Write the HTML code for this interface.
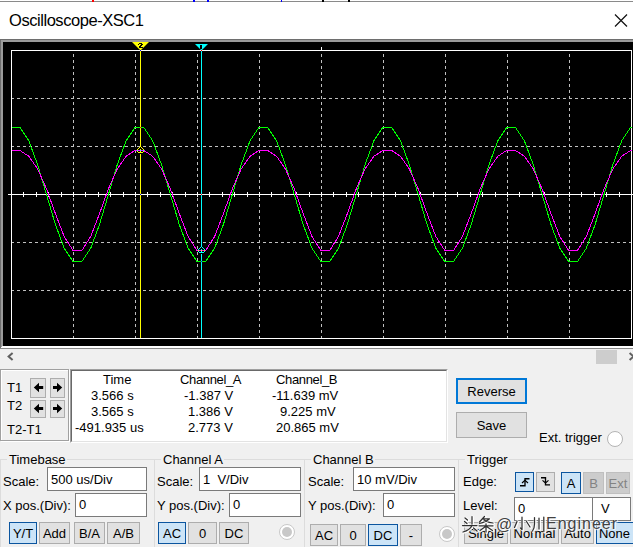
<!DOCTYPE html>
<html><head><meta charset="utf-8">
<style>
html,body{margin:0;padding:0;}
body{width:633px;height:547px;overflow:hidden;position:relative;background:#f0f0f0;font-family:"Liberation Sans",sans-serif;}
.a{position:absolute;}
.t{position:absolute;font-size:13px;line-height:15px;white-space:nowrap;color:#000;}
.btn{position:absolute;box-sizing:border-box;background:#e1e1e1;border:1px solid #adadad;font-size:13px;line-height:15px;text-align:center;white-space:nowrap;color:#000;}
.sel{background:#cce4f7;border:1px solid #0b559f;}
.dis{background:#cccccc;border:1px solid #bfbfbf;}
.inp{position:absolute;box-sizing:border-box;background:#fff;border:1px solid #7a7a7a;}
svg{position:absolute;left:0;top:0;}
</style></head><body>
<!-- title bar -->
<div class="a" style="left:0;top:0;width:633px;height:39px;background:#fff;"></div>
<div class="a" style="left:0;top:1px;width:633px;height:1px;background:#8a8a8a;"></div>
<div class="a" style="left:92px;top:0;width:2px;height:2px;background:#f00;"></div>
<div class="a" style="left:193px;top:0;width:2px;height:2px;background:#00f;"></div>
<div class="a" style="left:207px;top:0;width:2px;height:2px;background:#00f;"></div>
<div class="a" style="left:281px;top:0;width:1px;height:2px;background:#00f;"></div>
<div class="a" style="left:322px;top:0;width:2px;height:2px;background:#000;"></div>
<div class="a" style="left:348px;top:0;width:2px;height:2px;background:#000;"></div>
<div class="t" style="left:9px;top:11px;font-size:16.5px;line-height:19px;letter-spacing:-0.45px;color:#000;">Oscilloscope-XSC1</div>

<svg width="633" height="547" viewBox="0 0 633 547">
 <!-- close X -->
 <path d="M615 14.5 L627 26.5 M627 14.5 L615 26.5" stroke="#111" stroke-width="1.2" fill="none"/>
 <!-- screen frame -->
 <rect x="0" y="39" width="633" height="310" fill="#000"/>
 <rect x="0" y="39" width="633" height="1" fill="#6e6e6e"/>
 <rect x="0" y="40" width="633" height="2" fill="#9a9a9a"/>
 <rect x="0" y="39" width="1" height="310" fill="#6e6e6e"/>
 <rect x="1" y="40" width="2" height="308" fill="#9a9a9a"/>
 <rect x="2" y="346" width="631" height="2" fill="#fff"/>
 <rect x="1" y="347" width="1" height="1" fill="#fff"/>
 <rect x="0" y="348" width="633" height="1" fill="#8a8a8a"/>
 <!-- grid -->
 <g stroke="#c0c0c0" stroke-width="1" stroke-dasharray="3 3" shape-rendering="crispEdges">
<line x1="73.5" y1="54" x2="73.5" y2="338" />
<line x1="135.5" y1="54" x2="135.5" y2="338" />
<line x1="197.5" y1="54" x2="197.5" y2="338" />
<line x1="259.5" y1="54" x2="259.5" y2="338" />
<line x1="321.5" y1="54" x2="321.5" y2="338" />
<line x1="383.5" y1="54" x2="383.5" y2="338" />
<line x1="445.5" y1="54" x2="445.5" y2="338" />
<line x1="507.5" y1="54" x2="507.5" y2="338" />
<line x1="569.5" y1="54" x2="569.5" y2="338" />
<line x1="11" y1="98.5" x2="631" y2="98.5" />
<line x1="11" y1="146.5" x2="631" y2="146.5" />
<line x1="11" y1="242.5" x2="631" y2="242.5" />
<line x1="11" y1="290.5" x2="631" y2="290.5" />
 </g>
 <rect x="11.5" y="50.5" width="620" height="288" fill="none" stroke="#fff" stroke-width="1" shape-rendering="crispEdges"/>
 <rect x="8" y="194" width="626" height="1" fill="#fff"/>
 <g fill="#fff">
<rect x="11" y="192" width="1" height="5"/>
<rect x="23" y="192" width="1" height="5"/>
<rect x="36" y="192" width="1" height="5"/>
<rect x="48" y="192" width="1" height="5"/>
<rect x="61" y="192" width="1" height="5"/>
<rect x="73" y="192" width="1" height="5"/>
<rect x="85" y="192" width="1" height="5"/>
<rect x="98" y="192" width="1" height="5"/>
<rect x="110" y="192" width="1" height="5"/>
<rect x="123" y="192" width="1" height="5"/>
<rect x="135" y="192" width="1" height="5"/>
<rect x="147" y="192" width="1" height="5"/>
<rect x="160" y="192" width="1" height="5"/>
<rect x="172" y="192" width="1" height="5"/>
<rect x="185" y="192" width="1" height="5"/>
<rect x="197" y="192" width="1" height="5"/>
<rect x="209" y="192" width="1" height="5"/>
<rect x="222" y="192" width="1" height="5"/>
<rect x="234" y="192" width="1" height="5"/>
<rect x="247" y="192" width="1" height="5"/>
<rect x="259" y="192" width="1" height="5"/>
<rect x="271" y="192" width="1" height="5"/>
<rect x="284" y="192" width="1" height="5"/>
<rect x="296" y="192" width="1" height="5"/>
<rect x="309" y="192" width="1" height="5"/>
<rect x="321" y="192" width="1" height="5"/>
<rect x="333" y="192" width="1" height="5"/>
<rect x="346" y="192" width="1" height="5"/>
<rect x="358" y="192" width="1" height="5"/>
<rect x="371" y="192" width="1" height="5"/>
<rect x="383" y="192" width="1" height="5"/>
<rect x="395" y="192" width="1" height="5"/>
<rect x="408" y="192" width="1" height="5"/>
<rect x="420" y="192" width="1" height="5"/>
<rect x="433" y="192" width="1" height="5"/>
<rect x="445" y="192" width="1" height="5"/>
<rect x="457" y="192" width="1" height="5"/>
<rect x="470" y="192" width="1" height="5"/>
<rect x="482" y="192" width="1" height="5"/>
<rect x="495" y="192" width="1" height="5"/>
<rect x="507" y="192" width="1" height="5"/>
<rect x="519" y="192" width="1" height="5"/>
<rect x="532" y="192" width="1" height="5"/>
<rect x="544" y="192" width="1" height="5"/>
<rect x="557" y="192" width="1" height="5"/>
<rect x="569" y="192" width="1" height="5"/>
<rect x="581" y="192" width="1" height="5"/>
<rect x="594" y="192" width="1" height="5"/>
<rect x="606" y="192" width="1" height="5"/>
<rect x="619" y="192" width="1" height="5"/>
<rect x="631" y="192" width="1" height="5"/>
 <rect x="321" y="47" width="1" height="3"/>
 </g>
 <!-- traces -->
 <polyline points="11.50,127.50 19.92,127.50 28.78,140.77 37.62,164.68 46.47,194.50 55.33,224.32 64.17,248.23 73.03,261.50 81.88,261.50 90.72,248.23 99.57,224.32 108.42,194.50 117.27,164.68 126.12,140.77 134.97,127.50 143.82,127.50 152.67,140.77 161.52,164.68 170.38,194.50 179.22,224.32 188.07,248.23 196.92,261.50 205.77,261.50 214.62,248.23 223.47,224.32 232.32,194.50 241.17,164.68 250.02,140.77 258.88,127.50 267.73,127.50 276.57,140.77 285.42,164.68 294.27,194.50 303.12,224.32 311.98,248.23 320.82,261.50 329.67,261.50 338.52,248.23 347.38,224.32 356.23,194.50 365.07,164.68 373.92,140.77 382.77,127.50 391.62,127.50 400.48,140.77 409.32,164.68 418.17,194.50 427.02,224.32 435.88,248.23 444.73,261.50 453.57,261.50 462.42,248.23 471.27,224.32 480.12,194.50 488.98,164.68 497.82,140.77 506.67,127.50 515.52,127.50 524.38,140.77 533.23,164.68 542.07,194.50 550.92,224.32 559.77,248.23 568.62,261.50 577.48,261.50 586.32,248.23 595.17,224.32 604.02,194.50 612.88,164.68 621.73,140.77 630.57,127.50 631.50,127.50" fill="none" stroke="#00ff00" stroke-width="1" shape-rendering="crispEdges"/>
 <polyline points="11.50,150.49 19.92,150.49 28.78,156.26 37.62,168.94 46.47,188.90 55.33,213.45 64.17,236.46 73.03,250.50 81.88,250.50 90.72,236.46 99.57,213.45 108.42,188.90 117.27,168.94 126.12,156.26 134.97,150.49 143.82,150.49 152.67,156.26 161.52,168.94 170.38,188.90 179.22,213.45 188.07,236.46 196.92,250.50 205.77,250.50 214.62,236.46 223.47,213.45 232.32,188.90 241.17,168.94 250.02,156.26 258.88,150.49 267.73,150.49 276.57,156.26 285.42,168.94 294.27,188.90 303.12,213.45 311.98,236.46 320.82,250.50 329.67,250.50 338.52,236.46 347.38,213.45 356.23,188.90 365.07,168.94 373.92,156.26 382.77,150.49 391.62,150.49 400.48,156.26 409.32,168.94 418.17,188.90 427.02,213.45 435.88,236.46 444.73,250.50 453.57,250.50 462.42,236.46 471.27,213.45 480.12,188.90 488.98,168.94 497.82,156.26 506.67,150.49 515.52,150.49 524.38,156.26 533.23,168.94 542.07,188.90 550.92,213.45 559.77,236.46 568.62,250.50 577.48,250.50 586.32,236.46 595.17,213.45 604.02,188.90 612.88,168.94 621.73,156.26 630.57,150.49 631.50,150.49" fill="none" stroke="#ff00ff" stroke-width="1" shape-rendering="crispEdges"/>
 <!-- cursors -->
 <rect x="140" y="42" width="1" height="105" fill="#ffff00"/>
 <rect x="140" y="154" width="1" height="184" fill="#ffff00"/>
 <path d="M132 42 H149 L140.5 50.5 Z" fill="#ffff00"/>
 <g fill="#000"><rect x="139" y="43" width="3" height="1"/><rect x="138" y="44" width="1" height="1"/><rect x="141" y="44" width="2" height="1"/><rect x="140" y="45" width="2" height="1"/><rect x="139" y="46" width="2" height="1"/><rect x="139" y="47" width="4" height="1"/></g>
 <g fill="#ffff00"><rect x="139" y="147" width="1" height="1"/><rect x="141" y="147" width="1" height="1"/><rect x="138" y="148" width="1" height="1"/><rect x="142" y="148" width="1" height="1"/><rect x="137" y="149" width="1" height="1"/><rect x="143" y="149" width="1" height="1"/><rect x="140" y="149" width="1" height="1"/><rect x="137" y="150" width="1" height="1"/><rect x="143" y="150" width="1" height="1"/><rect x="140" y="150" width="1" height="1"/><rect x="137" y="151" width="1" height="1"/><rect x="143" y="151" width="1" height="1"/><rect x="140" y="151" width="1" height="1"/><rect x="138" y="152" width="1" height="1"/><rect x="139" y="152" width="1" height="1"/><rect x="140" y="152" width="1" height="1"/><rect x="141" y="152" width="1" height="1"/><rect x="142" y="152" width="1" height="1"/></g>
 <g fill="#00ffff"><rect x="137" y="150" width="1" height="1"/><rect x="140" y="150" width="1" height="1"/><rect x="143" y="150" width="1" height="1"/></g>
 <rect x="201" y="44" width="1" height="203" fill="#00ffff"/>
 <rect x="201" y="254" width="1" height="84" fill="#00ffff"/>
 <path d="M195 44 H208 L201.5 50.5 Z" fill="#00ffff"/>
 <rect x="200" y="45" width="2" height="4" fill="#000"/>
 <g fill="#00ffff"><rect x="200" y="247" width="1" height="1"/><rect x="202" y="247" width="1" height="1"/><rect x="199" y="248" width="1" height="1"/><rect x="203" y="248" width="1" height="1"/><rect x="198" y="249" width="1" height="1"/><rect x="204" y="249" width="1" height="1"/><rect x="201" y="249" width="1" height="1"/><rect x="198" y="250" width="1" height="1"/><rect x="204" y="250" width="1" height="1"/><rect x="201" y="250" width="1" height="1"/><rect x="198" y="251" width="1" height="1"/><rect x="204" y="251" width="1" height="1"/><rect x="201" y="251" width="1" height="1"/><rect x="199" y="252" width="1" height="1"/><rect x="200" y="252" width="1" height="1"/><rect x="201" y="252" width="1" height="1"/><rect x="202" y="252" width="1" height="1"/><rect x="203" y="252" width="1" height="1"/></g>
 <g fill="#ffff00"><rect x="198" y="250" width="1" height="1"/><rect x="201" y="250" width="1" height="1"/><rect x="204" y="250" width="1" height="1"/></g>
 <rect x="140" y="50" width="1" height="1" fill="#0000ff"/>
 <rect x="201" y="50" width="1" height="1" fill="#ff0000"/>
 <rect x="140" y="194" width="1" height="1" fill="#0000ff"/>
 <rect x="201" y="194" width="1" height="1" fill="#ff0000"/>
 <rect x="140" y="127" width="1" height="1" fill="#ff0000"/>
 <rect x="201" y="261" width="1" height="1" fill="#0000ff"/>
 <!-- scrollbar -->
 <path d="M12.6 353 L8.6 356.5 L12.6 360" stroke="#606060" stroke-width="2" fill="none"/>
 <rect x="596" y="350" width="21" height="14" fill="#cdcdcd"/>
 <path d="M629.6 353 L633.6 356.5 L629.6 360" stroke="#606060" stroke-width="2" fill="none"/>
</svg>

<!-- T box -->
<div class="a" style="left:1px;top:370px;width:69px;height:72px;box-sizing:border-box;border:1px solid #fff;"></div>
<div class="a" style="left:0;top:369px;width:69px;height:72px;box-sizing:border-box;border:1px solid #a0a0a0;"></div>
<div class="t" style="left:7px;top:380px;">T1</div>
<div class="t" style="left:7px;top:398px;">T2</div>
<div class="t" style="left:7px;top:422px;">T2-T1</div>
<div class="btn" style="left:30px;top:378px;width:16px;height:20px;"></div>
<div class="btn" style="left:50px;top:378px;width:15px;height:20px;"></div>
<div class="btn" style="left:30px;top:400px;width:16px;height:18px;"></div>
<div class="btn" style="left:50px;top:400px;width:15px;height:18px;"></div>
<svg width="633" height="547" viewBox="0 0 633 547" style="pointer-events:none">
 <path d="M33.8 387.5 L39 382.8 V385.9 H43.2 V389.1 H39 V392.2 Z" fill="#000"/>
 <path d="M62.2 387.5 L57 382.8 V385.9 H53 V389.1 H57 V392.2 Z" fill="#000"/>
 <path d="M33.8 408.5 L39 403.8 V406.9 H43.2 V410.1 H39 V413.2 Z" fill="#000"/>
 <path d="M62.2 408.5 L57 403.8 V406.9 H53 V410.1 H57 V413.2 Z" fill="#000"/>
</svg>

<!-- table -->
<div class="a" style="left:70px;top:369px;width:378px;height:74px;box-sizing:border-box;background:#fff;border-top:1px solid #a0a0a0;border-left:1px solid #a0a0a0;border-right:1px solid #fff;border-bottom:1px solid #fff;"></div>
<div class="a" style="left:71px;top:370px;width:376px;height:72px;box-sizing:border-box;border-top:1px solid #696969;border-left:1px solid #696969;border-right:1px solid #e3e3e3;border-bottom:1px solid #e3e3e3;"></div>
<div class="t" style="left:103px;top:372px;">Time</div>
<div class="t" style="left:91px;top:388px;">3.566 s</div>
<div class="t" style="left:91px;top:404px;">3.565 s</div>
<div class="t" style="left:75px;top:420px;">-491.935 us</div>
<div class="t" style="left:180px;top:372px;letter-spacing:-0.35px;">Channel_A</div>
<div class="t" style="left:184px;top:388px;">-1.387 V</div>
<div class="t" style="left:188px;top:404px;">1.386 V</div>
<div class="t" style="left:188px;top:420px;">2.773 V</div>
<div class="t" style="left:276px;top:372px;letter-spacing:-0.35px;">Channel_B</div>
<div class="t" style="left:272px;top:388px;">-11.639 mV</div>
<div class="t" style="left:280px;top:404px;">9.225 mV</div>
<div class="t" style="left:276px;top:420px;">20.865 mV</div>

<!-- reverse/save -->
<div class="btn" style="left:456px;top:378px;width:71px;height:26px;border:2px solid #0078d7;padding-top:4px;">Reverse</div>
<div class="btn" style="left:456px;top:412px;width:71px;height:26px;padding-top:5px;">Save</div>
<div class="t" style="left:539px;top:430px;">Ext. trigger</div>
<div class="a" style="left:607px;top:431px;width:16px;height:16px;box-sizing:border-box;border-radius:50%;border:1px solid #b4b4b4;background:#fff;"></div>

<!-- group boxes -->
<div class="a" style="left:0;top:459px;width:633px;height:1px;background:#dcdcdc;"></div>
<div class="a" style="left:0;top:459px;width:1px;height:88px;background:#dcdcdc;"></div>
<div class="a" style="left:154px;top:459px;width:1px;height:88px;background:#dcdcdc;"></div>
<div class="a" style="left:304px;top:459px;width:1px;height:88px;background:#dcdcdc;"></div>
<div class="a" style="left:458px;top:459px;width:1px;height:88px;background:#dcdcdc;"></div>
<div class="t" style="left:7px;top:452px;background:#f0f0f0;padding:0 1px 0 2px;">Timebase</div>
<div class="t" style="left:161px;top:452px;background:#f0f0f0;padding:0 1px 0 2px;">Channel A</div>
<div class="t" style="left:311px;top:452px;background:#f0f0f0;padding:0 1px 0 2px;">Channel B</div>
<div class="t" style="left:465px;top:452px;background:#f0f0f0;padding:0 1px 0 2px;">Trigger</div>

<!-- timebase -->
<div class="t" style="left:3px;top:474px;">Scale:</div>
<div class="inp" style="left:47px;top:467px;width:100px;height:24px;"></div>
<div class="t" style="left:51px;top:472px;">500 us/Div</div>
<div class="t" style="left:3px;top:498px;">X pos.(Div):</div>
<div class="inp" style="left:75px;top:493px;width:72px;height:24px;"></div>
<div class="t" style="left:79px;top:497px;">0</div>
<div class="btn sel" style="left:9px;top:522px;width:28px;height:22px;padding-top:3px;">Y/T</div>
<div class="btn" style="left:39px;top:522px;width:31px;height:22px;padding-top:3px;">Add</div>
<div class="btn" style="left:74px;top:522px;width:31px;height:22px;padding-top:3px;">B/A</div>
<div class="btn" style="left:107px;top:522px;width:33px;height:22px;padding-top:3px;">A/B</div>

<!-- channel A -->
<div class="t" style="left:157px;top:474px;">Scale:</div>
<div class="inp" style="left:199px;top:467px;width:102px;height:24px;"></div>
<div class="t" style="left:203px;top:472px;">1&nbsp; V/Div</div>
<div class="t" style="left:157px;top:498px;">Y pos.(Div):</div>
<div class="inp" style="left:229px;top:493px;width:72px;height:24px;"></div>
<div class="t" style="left:233px;top:497px;">0</div>
<div class="btn sel" style="left:158px;top:522px;width:28px;height:22px;padding-top:3px;">AC</div>
<div class="btn" style="left:188px;top:522px;width:29px;height:22px;padding-top:3px;">0</div>
<div class="btn" style="left:219px;top:522px;width:30px;height:22px;padding-top:3px;">DC</div>
<div class="a" style="left:279px;top:524px;width:16px;height:16px;box-sizing:border-box;border-radius:50%;border:1px solid #c8c8c8;background:#fff;"></div>
<div class="a" style="left:282px;top:527px;width:10px;height:10px;border-radius:50%;background:#c8c8c8;"></div>

<!-- channel B -->
<div class="t" style="left:308px;top:474px;">Scale:</div>
<div class="inp" style="left:353px;top:467px;width:102px;height:24px;"></div>
<div class="t" style="left:357px;top:472px;">10 mV/Div</div>
<div class="t" style="left:308px;top:498px;">Y pos.(Div):</div>
<div class="inp" style="left:383px;top:493px;width:72px;height:24px;"></div>
<div class="t" style="left:387px;top:497px;">0</div>
<div class="btn" style="left:310px;top:524px;width:28px;height:22px;padding-top:3px;">AC</div>
<div class="btn" style="left:340px;top:524px;width:26px;height:22px;padding-top:3px;">0</div>
<div class="btn sel" style="left:368px;top:524px;width:30px;height:22px;padding-top:3px;">DC</div>
<div class="btn" style="left:400px;top:524px;width:22px;height:22px;padding-top:3px;">-</div>
<div class="a" style="left:439px;top:526px;width:16px;height:16px;box-sizing:border-box;border-radius:50%;border:1px solid #c8c8c8;background:#fff;"></div>
<div class="a" style="left:442px;top:529px;width:10px;height:10px;border-radius:50%;background:#c8c8c8;"></div>

<!-- trigger -->
<div class="t" style="left:463px;top:474px;">Edge:</div>
<div class="btn sel" style="left:515px;top:472px;width:19px;height:20px;"></div>
<div class="btn" style="left:536px;top:472px;width:19px;height:20px;"></div>
<div class="btn sel" style="left:561px;top:472px;width:20px;height:22px;padding-top:3px;">A</div>
<div class="btn dis" style="left:583px;top:472px;width:21px;height:22px;padding-top:3px;color:#838383;">B</div>
<div class="btn dis" style="left:606px;top:472px;width:24px;height:22px;padding-top:3px;color:#838383;">Ext</div>
<div class="t" style="left:463px;top:498px;">Level:</div>
<div class="inp" style="left:514px;top:497px;width:79px;height:24px;"></div>
<div class="t" style="left:518px;top:501px;">0</div>
<div class="inp" style="left:592px;top:497px;width:39px;height:24px;"></div>
<div class="t" style="left:601px;top:501px;">V</div>
<div class="btn" style="left:464px;top:522px;width:44px;height:22px;padding-top:3px;">Single</div>
<div class="btn" style="left:510px;top:522px;width:49px;height:22px;padding-top:3px;">Normal</div>
<div class="btn" style="left:561px;top:522px;width:33px;height:22px;padding-top:3px;">Auto</div>
<div class="btn sel" style="left:596px;top:522px;width:40px;height:22px;padding-top:3px;padding-right:3px;">None</div>
<svg width="633" height="547" viewBox="0 0 633 547" style="pointer-events:none">
 <path d="M520 485.7 H525 V478.7 H529.5" stroke="#000" stroke-width="1.35" fill="none"/>
 <path d="M522 483 L525 480.3 L528 483" stroke="#000" stroke-width="1.1" fill="none"/>
 <path d="M541 477.7 H545.5 V484.9 H550" stroke="#000" stroke-width="1.35" fill="none"/>
 <path d="M542.5 480.3 L545.5 483 L548.5 480.3" stroke="#000" stroke-width="1.1" fill="none"/>
</svg>

<!-- watermark -->
<svg width="633" height="547" viewBox="0 0 633 547" style="pointer-events:none">
 <defs>
  <g id="cjk" fill="none" stroke-linecap="round" stroke-linejoin="round">
   <path d="M465 518 L467.5 520 M464.5 521.5 L467 523.5 M472 516.5 V524 M462.5 525.5 H477 M472 525.5 Q470 530 463 532 M473.5 528 L477 531"/>
   <path d="M484.5 516.5 L479.5 522 M482.5 518.8 H489.5 Q486 522 479.5 523.5 M484 520 Q488 522.5 493 523 M479 525.8 H493 M486 523.8 V532 M485.5 526.5 L480 530.5 M486.5 526.5 L492.5 530.5"/>
   <path d="M522 517 V529.5 L520.5 528 M517 521.5 L514.5 527.5 M526.5 521.5 L530 527"/>
   <path d="M534.5 517.5 V524 Q534.5 528 532.5 531 M539 518 V529 M543.8 517 V531.5"/>
  </g>
 </defs>
 <use href="#cjk" x="0.6" y="0.4" stroke="#ffffff" stroke-width="3" opacity="0.9"/>
 <use href="#cjk" stroke="#303030" stroke-width="1.25"/>
</svg>
<div class="t" style="left:496px;top:516px;font-size:16px;line-height:18px;color:#404040;opacity:0.99;text-shadow:1px 0 1px rgba(255,255,255,.95),1px 1px 1px rgba(255,255,255,.95),0 0 2px #fff;">@</div>
<div class="t" style="left:546px;top:515px;font-size:16px;line-height:18px;letter-spacing:1px;color:#404040;opacity:0.99;text-shadow:1px 0 1px rgba(255,255,255,.95),1px 1px 1px rgba(255,255,255,.95),0 0 2px #fff;">Engineer</div>
</body></html>
